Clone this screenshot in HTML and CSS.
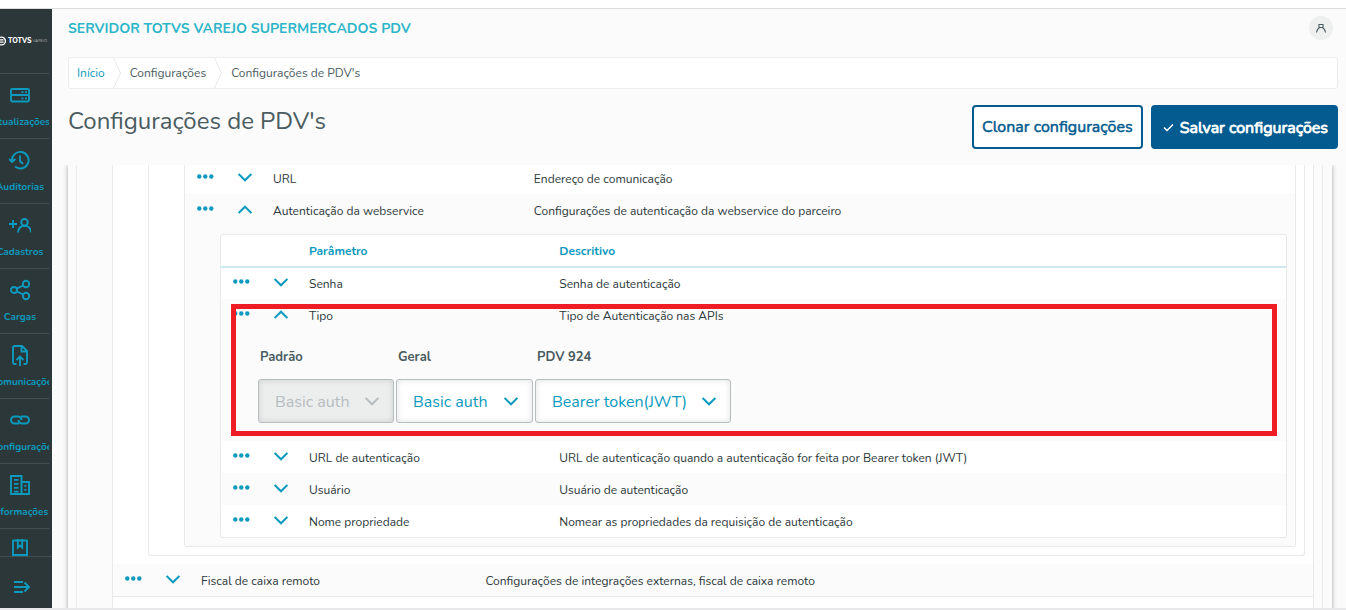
FILE: index.html
```html
<!DOCTYPE html>
<html lang="pt-BR">
<head>
<meta charset="utf-8">
<title>Configurações de PDV's</title>
<meta name="viewport" content="width=device-width, initial-scale=1">
<link rel="stylesheet" href="styles.css">
</head>
<body>
<svg class="defs" aria-hidden="true">
  <symbol id="dots" viewBox="0 0 17 5"><circle cx="2.3" cy="2.5" r="2.2"/><circle cx="8.3" cy="2.5" r="2.2"/><circle cx="14.3" cy="2.5" r="2.2"/></symbol>
  <symbol id="down" viewBox="0 0 14 9"><path d="M.6 1l6.400 6.300L13.400 1" fill="none" stroke="currentColor" stroke-width="2"/></symbol>
  <symbol id="up" viewBox="0 0 14 9"><path d="M.6 8L7 1.700 13.400 8" fill="none" stroke="currentColor" stroke-width="2"/></symbol>
</svg>
<div class="app">
  <aside class="sidebar">
    <div class="logo">
      <svg class="logo-mark" viewBox="0 0 7 10"><circle cx="1.500" cy="5" r="3.900" fill="none" stroke="#fff" stroke-width="1.400"/><path d="M0 3.800h3.500M0 6.200h3.500" fill="none" stroke="#fff" stroke-width="1.200"/></svg>
      <span class="logo-name">TOTVS</span><span class="logo-unit">VAREJO</span>
    </div>
    <nav class="menu">
      <a href="#"><svg viewBox="0 0 22 22"><g fill="none" stroke="currentColor" stroke-width="1.9"><rect x="2" y="5" width="18" height="6" rx="1.2"/><rect x="2" y="11" width="18" height="6.500" rx="1.2"/></g><path d="M12.500 7.200h2v1.800h-2zM16 7.200h2v1.800h-2zM12.500 13.400h2v1.800h-2zM16 13.400h2v1.800h-2z"/></svg><span>Atualizações</span></a>
      <a href="#"><svg viewBox="0 0 22 22"><path d="M3 12a8.300 8.300 0 1 1 3 5.600M0 10l3 3 3.400-3M11 6.500V12l3 3" fill="none" stroke="currentColor" stroke-width="1.900"/></svg><span>Auditorias</span></a>
      <a href="#"><svg viewBox="0 0 22 22"><path d="M0 10h8M4 6v8M9 18.500c0-9 13-9 13 0" fill="none" stroke="currentColor" stroke-width="1.900"/><circle cx="15.500" cy="8.300" r="3.300" fill="none" stroke="currentColor" stroke-width="1.900"/></svg><span>Cadastros</span></a>
      <a href="#"><svg viewBox="0 0 22 22"><g fill="none" stroke="currentColor" stroke-width="1.900"><circle cx="5" cy="11" r="3"/><circle cx="17" cy="5" r="3.200"/><circle cx="17" cy="17" r="3.200"/><path d="M7.700 9.700l6.500-3.200M7.700 12.300l6.500 3.200"/></g></svg><span>Cargas</span></a>
      <a href="#"><svg viewBox="0 0 22 22"><path d="M7.500 20H5.500Q4 20 4 18.500v-15Q4 2 5.500 2H13l5 5v11.500q0 1.500-1.500 1.500H14.500M12.500 2v5.500H18M11 22v-9M7.500 16l3.500-3.500 3.500 3.500" fill="none" stroke="currentColor" stroke-width="1.900"/></svg><span>Comunicações</span></a>
      <a href="#"><svg viewBox="0 0 22 22"><path d="M10 14.500H5.500a3.500 3.500 0 0 1 0-7H9a3.500 3.500 0 0 1 3.500 3.500M12 7.500h4.500a3.500 3.500 0 0 1 0 7H13a3.500 3.500 0 0 1-3.500-3.500" fill="none" stroke="currentColor" stroke-width="1.900"/></svg><span>Configurações</span></a>
      <a href="#"><svg viewBox="0 0 22 22"><path d="M2 2h10.500v18H2zM12.500 8H20v12h-7.500z" fill="none" stroke="currentColor" stroke-width="1.900"/><path d="M5 5h4.500v1.800H5zM5 9h4.500v1.800H5zM5 13h4.500v1.800H5zM5 16.800h4.500v1.800H5zM15.300 11h2v1.800h-2zM15.300 15h2v1.800h-2z"/></svg><span>Informações</span></a>
      <a href="#"><svg viewBox="0 0 22 22"><path d="M4 1.500h14v14.500H4zM8.800 0v8.500L11 6.500l2.200 2V0" fill="none" stroke="currentColor" stroke-width="1.900"/></svg><span>Manuais</span></a>
    </nav>
    <button class="expand" aria-label="Expandir menu"><svg viewBox="0 0 18 14"><path d="M1 2h9M1 7h15M1 12h9M11.500 2.500L16 7l-4.500 4.500" fill="none" stroke="currentColor" stroke-width="1.900"/></svg></button>
  </aside>
  <main class="page">
    <header class="topbar">
      <span class="product">SERVIDOR TOTVS VAREJO SUPERMERCADOS PDV</span>
      <button class="avatar" aria-label="Usuário"><svg viewBox="0 0 12 12"><path d="M1.500 10.500q.7-4 3-4.800M10.500 10.500q-.7-4-3-4.800M4 2.500h4v3H4z" fill="none" stroke="#4a5c60" stroke-width="1.100"/></svg></button>
    </header>
    <nav class="crumbs" aria-label="Navegação">
      <a href="#">Início</a>
      <svg viewBox="0 0 9 30"><path d="M.5 0l7 15-7 15" fill="none" stroke="#e6e8e8"/></svg>
      <span>Configurações</span>
      <svg viewBox="0 0 9 30"><path d="M.5 0l7 15-7 15" fill="none" stroke="#e6e8e8"/></svg>
      <span>Configurações de PDV's</span>
    </nav>
    <div class="heading">
      <h1>Configurações de PDV's</h1>
      <div class="actions">
        <button class="btn">Clonar configurações</button>
        <button class="btn primary"><svg viewBox="0 0 11 9"><path d="M1 4.500l3 3 6-6" fill="none" stroke="currentColor" stroke-width="1.500"/></svg>Salvar configurações</button>
      </div>
    </div>
    <div class="viewport">
      <div class="panel"><div class="group">
        <div class="box open">
        <table class="grid">
          <colgroup><col class="c-menu"><col class="c-toggle"><col class="c-group"><col></colgroup>
          <tr><td colspan="4" class="nest">
            <div class="box open"><div class="nest">
              <div class="box open">
              <table class="grid">
                <colgroup><col class="c-menu"><col class="c-toggle"><col class="c-name"><col></colgroup>
                <tr class="partial"><td><button aria-label="Opções"><svg class="dots"><use href="#dots"/></svg></button></td><td><button aria-label="Abrir"><svg class="chev"><use href="#down"/></svg></button></td><td>URL</td><td>Endereço de comunicação</td></tr>
                <tr class="alt"><td><button aria-label="Opções"><svg class="dots"><use href="#dots"/></svg></button></td><td><button aria-label="Fechar"><svg class="chev"><use href="#up"/></svg></button></td><td>Autenticação da webservice</td><td>Configurações de autenticação da webservice do parceiro</td></tr>
                <tr class="alt"><td colspan="4" class="nest top">
                  <div class="box inner">
                  <table class="grid">
                    <colgroup><col class="c-menu"><col class="c-toggle"><col class="c-name"><col></colgroup>
                    <thead><tr><th></th><th></th><th>Parâmetro</th><th>Descritivo</th></tr></thead>
                    <tbody>
                    <tr><td><button aria-label="Opções"><svg class="dots"><use href="#dots"/></svg></button></td><td><button aria-label="Abrir"><svg class="chev"><use href="#down"/></svg></button></td><td>Senha</td><td>Senha de autenticação</td></tr>
                    <tr class="alt"><td><button aria-label="Opções"><svg class="dots"><use href="#dots"/></svg></button></td><td><button aria-label="Fechar"><svg class="chev"><use href="#up"/></svg></button></td><td>Tipo</td><td>Tipo de Autenticação nas APIs</td></tr>
                    <tr class="alt"><td colspan="4" class="form-cell">
                      <div class="fields">
                        <div class="field"><label for="padrao">Padrão</label><div class="pick"><select id="padrao" disabled><option>Basic auth</option></select><svg class="chev"><use href="#down"/></svg></div></div>
                        <div class="field"><label for="geral">Geral</label><div class="pick"><select id="geral"><option>Basic auth</option></select><svg class="chev"><use href="#down"/></svg></div></div>
                        <div class="field wide"><label for="pdv">PDV 924</label><div class="pick"><select id="pdv"><option>Bearer token(JWT)</option></select><svg class="chev"><use href="#down"/></svg></div></div>
                      </div>
                    </td></tr>
                    <tr><td><button aria-label="Opções"><svg class="dots"><use href="#dots"/></svg></button></td><td><button aria-label="Abrir"><svg class="chev"><use href="#down"/></svg></button></td><td>URL de autenticação</td><td>URL de autenticação quando a autenticação for feita por Bearer token (JWT)</td></tr>
                    <tr class="alt"><td><button aria-label="Opções"><svg class="dots"><use href="#dots"/></svg></button></td><td><button aria-label="Abrir"><svg class="chev"><use href="#down"/></svg></button></td><td>Usuário</td><td>Usuário de autenticação</td></tr>
                    <tr><td><button aria-label="Opções"><svg class="dots"><use href="#dots"/></svg></button></td><td><button aria-label="Abrir"><svg class="chev"><use href="#down"/></svg></button></td><td>Nome propriedade</td><td>Nomear as propriedades da requisição de autenticação</td></tr>
                    </tbody>
                  </table>
                  <div class="highlight"></div>
                  </div>
                </td></tr>
              </table>
              </div>
            </div></div>
          </td></tr>
          <tr class="alt line"><td><button aria-label="Opções"><svg class="dots"><use href="#dots"/></svg></button></td><td><button aria-label="Abrir"><svg class="chev"><use href="#down"/></svg></button></td><td>Fiscal de caixa remoto</td><td>Configurações de integrações externas, fiscal de caixa remoto</td></tr>
          <tr><td><button aria-label="Opções"><svg class="dots"><use href="#dots"/></svg></button></td><td><button aria-label="Abrir"><svg class="chev"><use href="#down"/></svg></button></td><td></td><td></td></tr>
        </table>
        </div>
      </div></div>
    </div>
  </main>
</div>
</body>
</html>
```
FILE: styles.css
```css
* { box-sizing: border-box; }
body {
  margin: 0;
  height: 100vh;
  display: flex;
  background: #fff;
  color: #2c3739;
  font: 12px/16px Nunito, "Open Sans", sans-serif;
  overflow: hidden;
}
button, select { font: inherit; color: inherit; }
button { cursor: pointer; }
a { color: #0c9abe; text-decoration: none; }
svg { display: block; fill: currentColor; flex: none; }
.defs { position: absolute; width: 0; height: 0; }

.app {
  flex: 1;
  min-width: 0;
  display: flex;
  margin-top: 8px;
  border-top: 1px solid #dddede;
  border-bottom: 2px solid #e8e8ea;
  background: #fbfbfb;
}

.sidebar {
  width: 52px;
  flex: none;
  display: flex;
  flex-direction: column;
  overflow: hidden;
  background: #2c3739;
  color: #0c9abe;
}
.logo {
  height: 64px;
  flex: none;
  display: flex;
  align-items: center;
  gap: 1px;
  color: #fff;
  white-space: nowrap;
}
.logo-mark { width: 7px; height: 10px; }
.logo-name { font-size: 7px; font-weight: 800; }
.logo-unit { font-size: 4px; color: #a5abac; }
.menu {
  flex: 1;
  min-height: 0;
  width: 58px;
  margin-left: -9px;
  overflow: hidden;
}
.menu a {
  display: flex;
  flex-direction: column;
  align-items: center;
  gap: 8px;
  height: 65px;
  padding-top: 10px;
  border-top: 1px solid #435053;
}
.menu svg { width: 22px; height: 22px; }
.menu span {
  width: 100%;
  overflow: hidden;
  text-align: center;
  white-space: nowrap;
  font-size: 10px;
  font-weight: 700;
}
.expand {
  height: 52px;
  flex: none;
  padding: 8px 0 0 13px;
  border: 0;
  border-top: 1px solid #435053;
  background: none;
}
.expand svg { width: 18px; height: 14px; }

.page {
  flex: 1;
  min-width: 0;
  display: flex;
  flex-direction: column;
  padding: 0 8px 0 16px;
}
.topbar {
  height: 38px;
  flex: none;
  display: flex;
  align-items: center;
  justify-content: space-between;
  padding-right: 5px;
}
.product { padding-top: 2px; font-size: 14px; font-weight: 700; color: #2cb5c8; }
.avatar {
  width: 24px;
  height: 24px;
  display: grid;
  place-items: center;
  padding: 0;
  border: 0;
  border-radius: 50%;
  background: #eeefef;
}
.avatar svg { width: 12px; height: 12px; }
.crumbs {
  height: 32px;
  flex: none;
  display: flex;
  align-items: center;
  gap: 8px;
  margin-top: 10px;
  padding: 0 8px;
  border: 1px solid #eceeee;
  border-radius: 3px;
  background: #fff;
  color: #4a5c60;
}
.crumbs svg { width: 9px; height: 30px; }
.heading {
  height: 76px;
  flex: none;
  display: flex;
  align-items: flex-start;
  justify-content: space-between;
  padding-top: 16px;
}
h1 {
  margin: 0;
  font-size: 24px;
  line-height: 32px;
  font-weight: 400;
  color: #4a5c60;
}
.actions { display: flex; gap: 8px; }
.btn {
  height: 44px;
  display: flex;
  align-items: center;
  gap: 6px;
  padding: 0 8px;
  border: 2px solid #045b8f;
  border-radius: 4px;
  background: #fff;
  color: #045b8f;
  font-size: 16px;
  font-weight: 400;
  -webkit-text-stroke: .5px currentColor;
}
.btn.primary { padding: 1px 8px 0 10px; background: #045b8f; color: #fff; -webkit-text-stroke-width: .8px; }
.btn svg { width: 11px; height: 9px; }

.viewport {
  flex: 1;
  min-height: 0;
  overflow: hidden;
  margin-left: -8px;
  padding: 0 6px 0 8px;
}
.panel {
  padding: 0 9px 0 8px;
  box-shadow: 0 0 5px rgba(0, 0, 0, .35);
  clip-path: inset(0 -6px 0 -6px);
  background: #fbfbfb;
}
.group {
  padding: 0 8px 0 35px;
  border: solid #eaebeb;
  border-width: 0 1px;
}
.box {
  border: 1px solid #e8eaea;
  border-radius: 3px;
  background: #fff;
}
.box.open { border-top: 0; border-radius: 0 0 3px 3px; }
.nest { padding: 0 8px 8px 35px; }
.inner { position: relative; }

.grid { width: 100%; table-layout: fixed; border-collapse: separate; border-spacing: 0; }
.c-menu { width: 41px; }
.c-toggle { width: 39px; }
.c-name { width: 23.5%; }
.c-group { width: 23.7%; }
td, th { height: 32px; padding: 2px 8px 0; text-align: left; vertical-align: middle; }
thead + tbody tr:first-child td { height: 31px; padding-top: 0; }
.partial td { height: 29px; padding: 0 8px 2px; }
td:first-child:not([colspan]) { padding: 0 0 4px 12px; }
td:nth-child(2) { padding: 0 0 2px 12px; }
.partial td:first-child:not([colspan]) { padding-bottom: 7px; }
.partial td:nth-child(2) { padding: 0 0 4px 12px; }
td.nest { height: auto; padding: 0 8px 8px 35px; }
td.nest.top { padding-top: 8px; }
th { height: 33px; padding-top: 0; border-bottom: 2px solid #cde8ef; color: #0c9abe; font-weight: 700; }
.alt { background: #fbfbfb; }
.line td { height: 33px; border-bottom: 1px solid #e8eaea; }
.grid button { display: block; padding: 0; border: 0; background: none; color: #0c9abe; }
.dots { width: 17px; height: 5px; }
.chev { width: 14px; height: 9px; }

td.form-cell { height: auto; padding: 18px 8px 18px 37px; }
.fields { display: flex; gap: 2px; }
.field { width: 136px; }
.field + .field { width: 137px; }
.field.field.wide { width: 196px; }
.field label {
  display: block;
  margin-bottom: 14px;
  padding-left: 2px;
  font-size: 13px;
  font-weight: 700;
  color: #4a5c60;
}
.pick { display: grid; align-items: center; color: #0c9abe; }
.pick select {
  grid-area: 1 / 1;
  width: 100%;
  height: 44px;
  padding: 2px 32px 0 16px;
  appearance: none;
  border: 1px solid #b6bdbf;
  border-radius: 3px;
  background: #fff;
  box-shadow: inset 0 0 6px rgba(0, 0, 0, .12);
  font-size: 16px;
}
.pick .chev { grid-area: 1 / 1; justify-self: end; margin-right: 15px; pointer-events: none; }
.pick select:disabled { background: #eceeee; color: #b6bdbf; opacity: 1; }
.pick select:disabled + .chev { color: #b6bdbf; }

.highlight {
  position: absolute;
  inset: 69px 9px auto 10px;
  height: 132px;
  border: 5px solid #ee1c25;
  pointer-events: none;
}
```
